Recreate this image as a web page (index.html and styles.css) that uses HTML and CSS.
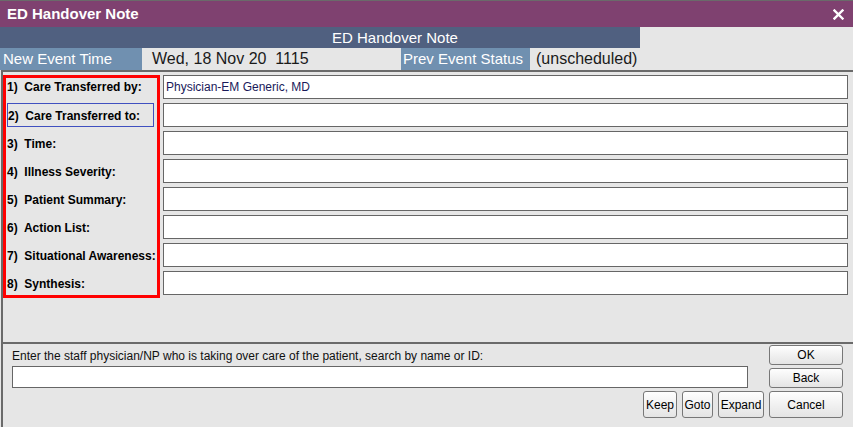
FILE: index.html
```html
<!DOCTYPE html>
<html>
<head>
<meta charset="utf-8">
<link rel="stylesheet" href="styles.css">
</head>
<body>
<div class="window">
  <div class="titlebar">
    <span class="title">ED Handover Note</span>
    <svg class="close" width="11" height="11" viewBox="0 0 11 11"><path d="M1.5 1.5 L9.5 9.5 M9.5 1.5 L1.5 9.5" stroke="#fff" stroke-width="2.4" stroke-linecap="square"/></svg>
  </div>
  <div class="subheader"><div class="band">ED Handover Note</div></div>
  <div class="inforow">
    <div class="lbl lbl-new">New Event Time</div>
    <div class="val val-new">Wed, 18 Nov 20&nbsp;&nbsp;1115</div>
    <div class="lbl lbl-prev">Prev Event Status</div>
    <div class="val">(unscheduled)</div>
  </div>
  <div class="main">
    <div class="labels">
      <div class="label first">1)  Care Transferred by:</div>
      <div class="label focus">2)  Care Transferred to:</div>
      <div class="label">3)  Time:</div>
      <div class="label">4)  Illness Severity:</div>
      <div class="label">5)  Patient Summary:</div>
      <div class="label">6)  Action List:</div>
      <div class="label">7)  Situational Awareness:</div>
      <div class="label">8)  Synthesis:</div>
    </div>
    <div class="fields">
      <div class="field">Physician-EM Generic, MD</div>
      <div class="field"></div>
      <div class="field"></div>
      <div class="field"></div>
      <div class="field"></div>
      <div class="field"></div>
      <div class="field"></div>
      <div class="field"></div>
    </div>
  </div>
  <div class="bottom">
    <div class="toprow">
      <div class="entry">
        <div class="hint">Enter the staff physician/NP who is taking over care of the patient, search by name or ID:</div>
        <div class="input"></div>
      </div>
      <div class="stack">
        <button class="btn btn-main">OK</button>
        <button class="btn btn-main">Back</button>
      </div>
    </div>
    <div class="btnrow">
      <button class="btn btn-keep">Keep</button>
      <button class="btn btn-goto">Goto</button>
      <button class="btn btn-expand">Expand</button>
      <button class="btn btn-cancel">Cancel</button>
    </div>
  </div>
</div>
</body>
</html>
```
FILE: styles.css
```css
html, body {
  margin: 0;
  padding: 0;
  background: #e6e6e6;
}
body {
  width: 853px;
  height: 427px;
  overflow: hidden;
  font-family: "Liberation Sans", Arial, sans-serif;
}
.window {
  width: 853px;
  height: 427px;
  display: flex;
  flex-direction: column;
}
.titlebar {
  height: 26px;
  border-top: 1px solid #6a6a6a;
  background: #7f4170;
  display: flex;
  align-items: center;
  justify-content: space-between;
  padding: 0 9px 0 7px;
}
.title {
  color: #fff;
  font-weight: bold;
  font-size: 15px;
  line-height: 28px;
}
.close {
  display: block;
  margin-top: 1px;
}
.subheader {
  height: 21px;
  display: flex;
}
.band {
  width: 640px;
  background: #506080;
  color: #fff;
  font-size: 15px;
  line-height: 22px;
  padding-left: 332px;
  box-sizing: border-box;
}
.inforow {
  height: 22px;
  display: flex;
  font-size: 15px;
  line-height: 22px;
}
.lbl {
  background: #7090b0;
  color: #fff;
  box-sizing: border-box;
}
.lbl-new {
  width: 142px;
  padding-left: 3px;
}
.lbl-prev {
  width: 129px;
  padding-left: 2px;
}
.val {
  color: #1a1a1a;
  font-size: 16px;
  padding-left: 6px;
}
.val-new {
  width: 259px;
  box-sizing: border-box;
  padding-left: 10px;
}
.main {
  margin-left: 1px;
  border-top: 2px solid #6a6a6a;
  border-left: 2px solid #6a6a6a;
  border-bottom: 2px solid #6a6a6a;
  display: flex;
  align-items: flex-start;
  padding-top: 3px;
  box-sizing: content-box;
  height: 267px;
}
.labels {
  width: 151px;
  border: 3px solid #ff0000;
  display: grid;
  grid-template-rows: 21px repeat(7, 24px);
  row-gap: 4px;
  font-size: 12px;
  font-weight: bold;
  color: #000;
}
.label {
  white-space: pre;
  display: flex;
  align-items: center;
  padding-left: 1px;
  padding-top: 1px;
  box-sizing: border-box;
}
.label.first {
  padding-bottom: 3px;
  padding-top: 0;
}
.label.focus {
  margin-left: 1px;
  width: 147px;
  border: 1px solid #4050c0;
  padding-left: 0;
}
.fields {
  margin-left: 3px;
  width: 685px;
  display: flex;
  flex-direction: column;
  gap: 4px;
}
.field {
  height: 24px;
  box-sizing: border-box;
  border: 1px solid #666;
  background: #fff;
  font-size: 12px;
  line-height: 22px;
  padding-left: 2px;
  color: #1a1a5a;
}
.bottom {
  flex: 1;
  margin-left: 1px;
  border-left: 2px solid #6a6a6a;
  padding: 1px 10px 0 9px;
  display: flex;
  flex-direction: column;
  gap: 3px;
}
.toprow {
  display: flex;
  justify-content: space-between;
}
.entry {
  width: 736px;
}
.hint {
  font-size: 12px;
  line-height: 14px;
  color: #111;
  padding-top: 4px;
  height: 18px;
  box-sizing: border-box;
  margin-bottom: 3px;
}
.input {
  height: 22px;
  box-sizing: border-box;
  border: 1px solid #666;
  background: #fff;
}
.stack {
  display: flex;
  flex-direction: column;
  gap: 3px;
}
.btn {
  font-family: "Liberation Sans", Arial, sans-serif;
  font-size: 12px;
  color: #000;
  border: 1px solid #777;
  border-radius: 3px;
  background: linear-gradient(#fefefe, #e4e4e4);
  padding: 0;
  margin: 0;
  box-sizing: border-box;
}
.btn-main {
  width: 74px;
  height: 20px;
}
.btnrow {
  display: flex;
  justify-content: flex-end;
  gap: 5px;
}
.btnrow .btn {
  height: 27px;
}
.btn-keep { width: 34px; }
.btn-goto { width: 31px; }
.btn-expand { width: 46px; }
.btn-cancel { width: 74px; }
```
